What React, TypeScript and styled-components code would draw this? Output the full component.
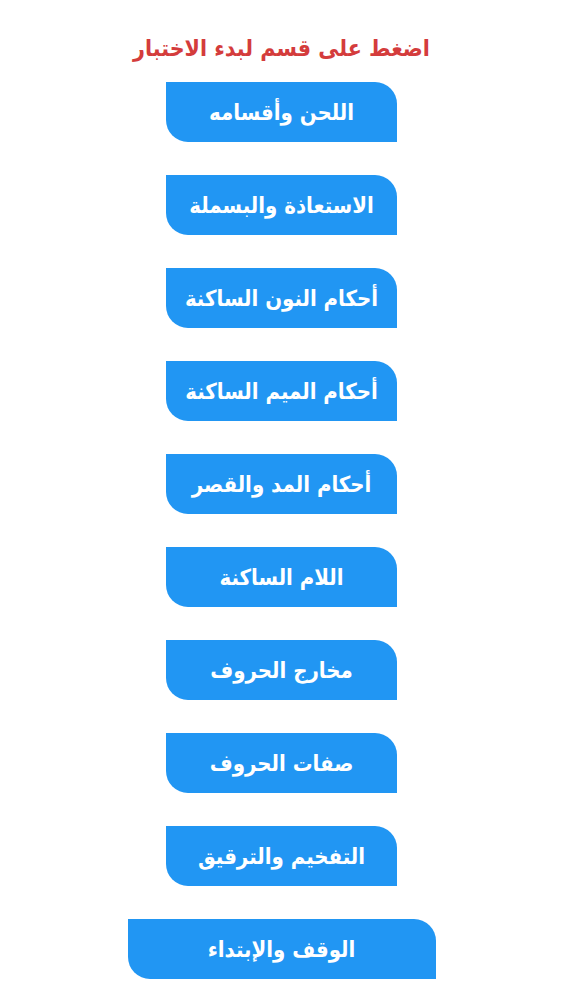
import styled, { createGlobalStyle } from "styled-components";

const sections: { id: number; title: string; wide?: boolean }[] = [
  { id: 1, title: "اللحن وأقسامه" },
  { id: 2, title: "الاستعاذة والبسملة" },
  { id: 3, title: "أحكام النون الساكنة" },
  { id: 4, title: "أحكام الميم الساكنة" },
  { id: 5, title: "أحكام المد والقصر" },
  { id: 6, title: "اللام الساكنة" },
  { id: 7, title: "مخارج الحروف" },
  { id: 8, title: "صفات الحروف" },
  { id: 9, title: "التفخيم والترقيق" },
  { id: 10, title: "الوقف والإبتداء", wide: true },
];

const App = () => {
  return (
    <>
      <GlobalStyle />
      <Page dir="rtl">
        <Heading>اضغط على قسم لبدء الاختبار</Heading>
        <List>
          {sections.map((item) => (
            <SectionButton key={item.id} $wide={item.wide}>
              {item.title}
            </SectionButton>
          ))}
        </List>
      </Page>
    </>
  );
};

const GlobalStyle = createGlobalStyle`
  html, body {
    margin: 0;
    padding: 0;
    background: #fff;
  }
  body {
    font-family: "DejaVu Sans Condensed", "DejaVu Sans", sans-serif;
  }
`;

const Page = styled.div`
  width: 563px;
  min-height: 1000px;
  display: flex;
  flex-direction: column;
  align-items: center;
  padding-top: 32px;
  box-sizing: border-box;
`;

const Heading = styled.h1`
  margin: 0;
  color: #d43c3c;
  font-size: 23px;
  font-weight: bold;
  line-height: 32px;
`;

const List = styled.div`
  margin-top: 18px;
  display: flex;
  flex-direction: column;
  align-items: center;
  gap: 33px;
`;

const SectionButton = styled.button<{ $wide?: boolean }>`
  width: ${(p) => (p.$wide ? "308px" : "231px")};
  height: 60px;
  border: none;
  border-radius: 0 22px 0 22px;
  background-color: #2196f3;
  color: #fff;
  font-family: "DejaVu Sans Condensed", "DejaVu Sans", sans-serif;
  font-size: 22px;
  font-weight: bold;
  cursor: pointer;
  padding: 0 8px;
`;

export default App;
